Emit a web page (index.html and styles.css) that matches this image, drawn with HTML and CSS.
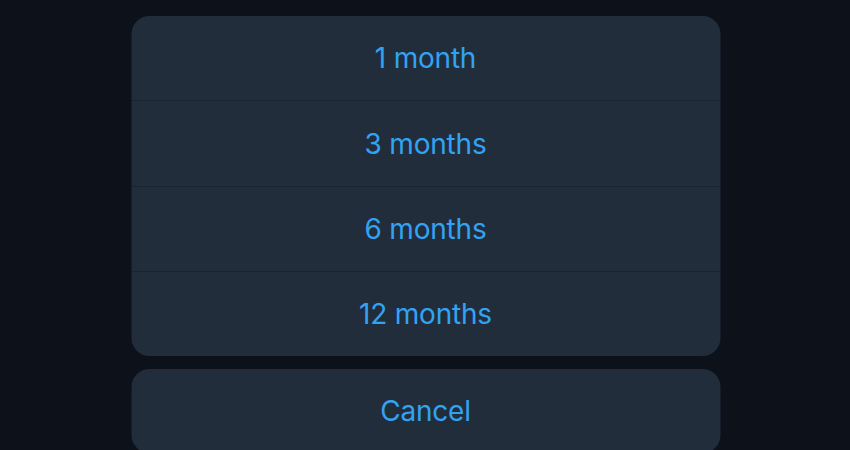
FILE: index.html
```html
<!DOCTYPE html>
<html>
<head>
<meta charset="utf-8">
<link rel="stylesheet" href="styles.css">
</head>
<body>
<div class="sheet">
  <div class="group">
    <div class="item">1 month</div>
    <div class="item">3 months</div>
    <div class="item">6 months</div>
    <div class="item">12 months</div>
  </div>
  <div class="group">
    <div class="item">Cancel</div>
  </div>
</div>
</body>
</html>
```
FILE: styles.css
```css
html, body {
  margin: 0;
  padding: 0;
  background: #0d111a;
  height: 100%;
  overflow: hidden;
}
.sheet {
  width: 589px;
  margin: 0 auto;
  padding-top: 16px;
  display: flex;
  flex-direction: column;
  gap: 13px;
  transform: translateX(0.5px);
}
.group {
  background: #222d3c;
  border-radius: 18px;
  overflow: hidden;
}
.item {
  height: 85px;
  display: flex;
  align-items: center;
  justify-content: center;
  font-family: Inter, "Noto Sans", sans-serif;
  font-size: 28px;
  letter-spacing: -0.2px;
  color: #32a3f2;
  border-top: 1px solid #1a2330;
  box-sizing: border-box;
}
.item:first-child {
  border-top: none;
  height: 84px;
}
.item:nth-child(2) {
  height: 86px;
}
```
